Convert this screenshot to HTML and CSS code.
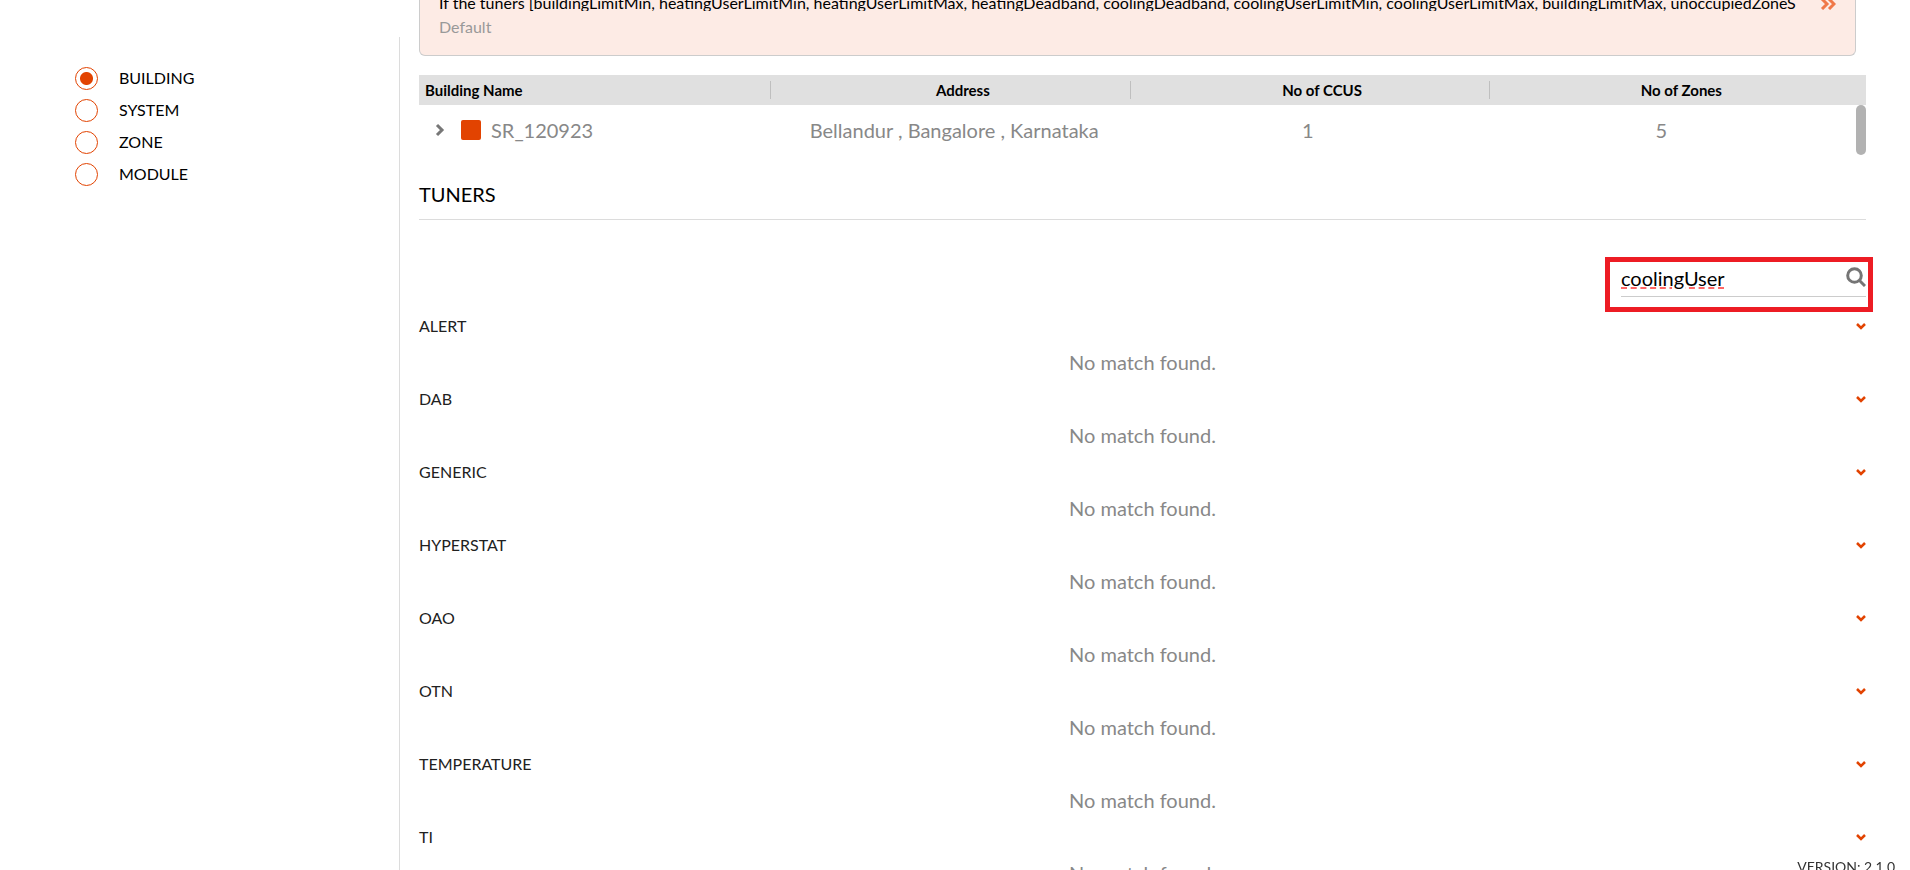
FILE: index.html
```html
<!DOCTYPE html>
<html lang="en">
<head>
  <meta charset="UTF-8">
  <title>Tuners</title>
  <link rel="stylesheet" href="styles.css">
</head>
<body>
  <div class="page">
    <aside class="sidebar">
      <form class="levels">
        <label class="level"><input type="radio" name="level" checked>BUILDING</label>
        <label class="level"><input type="radio" name="level">SYSTEM</label>
        <label class="level"><input type="radio" name="level">ZONE</label>
        <label class="level"><input type="radio" name="level">MODULE</label>
      </form>
    </aside>

    <main class="content">
      <section class="notice">
        <div class="notice-row">
          <p class="notice-text">If the tuners [buildingLimitMin, heatingUserLimitMin, heatingUserLimitMax, heatingDeadband, coolingDeadband, coolingUserLimitMin, coolingUserLimitMax, buildingLimitMax, unoccupiedZoneS</p>
          <button class="notice-more" type="button" aria-label="Show more">
            <svg viewBox="0 0 16 12" width="16" height="12"><path d="M2 1l5 5-5 5M9 1l5 5-5 5"/></svg>
          </button>
        </div>
        <p class="notice-sub">Default</p>
      </section>

      <table class="buildings">
        <thead>
          <tr>
            <th>Building Name</th>
            <th>Address</th>
            <th>No of CCUS</th>
            <th>No of Zones</th>
          </tr>
        </thead>
        <tbody>
          <tr>
            <td>
              <button class="expand" type="button" aria-label="Expand">
                <svg viewBox="0 0 10 14" width="10" height="14"><path d="M2 2l5 5-5 5"/></svg>
              </button>
              <span class="swatch"></span>
              SR_120923
            </td>
            <td>Bellandur , Bangalore , Karnataka</td>
            <td>1</td>
            <td>5</td>
          </tr>
        </tbody>
      </table>

      <h2 class="title">TUNERS</h2>

      <div class="search">
        <div class="search-field">
          <input class="search-input" type="text" value="coolingUser" aria-label="Search tuners">
          <button class="search-btn" type="button" aria-label="Search">
            <svg viewBox="0 0 20 20" width="20" height="20"><circle cx="8.5" cy="8.5" r="6.8"/><path d="M13 13l6 6"/></svg>
          </button>
        </div>
      </div>

      <div class="groups">
        <section class="group">
          <button class="group-head" type="button">ALERT<svg class="caret" viewBox="0 0 10 7" width="10" height="7"><path d="M1 1l4 4 4-4"/></svg></button>
          <p class="empty">No match found.</p>
        </section>
        <section class="group">
          <button class="group-head" type="button">DAB<svg class="caret" viewBox="0 0 10 7" width="10" height="7"><path d="M1 1l4 4 4-4"/></svg></button>
          <p class="empty">No match found.</p>
        </section>
        <section class="group">
          <button class="group-head" type="button">GENERIC<svg class="caret" viewBox="0 0 10 7" width="10" height="7"><path d="M1 1l4 4 4-4"/></svg></button>
          <p class="empty">No match found.</p>
        </section>
        <section class="group">
          <button class="group-head" type="button">HYPERSTAT<svg class="caret" viewBox="0 0 10 7" width="10" height="7"><path d="M1 1l4 4 4-4"/></svg></button>
          <p class="empty">No match found.</p>
        </section>
        <section class="group">
          <button class="group-head" type="button">OAO<svg class="caret" viewBox="0 0 10 7" width="10" height="7"><path d="M1 1l4 4 4-4"/></svg></button>
          <p class="empty">No match found.</p>
        </section>
        <section class="group">
          <button class="group-head" type="button">OTN<svg class="caret" viewBox="0 0 10 7" width="10" height="7"><path d="M1 1l4 4 4-4"/></svg></button>
          <p class="empty">No match found.</p>
        </section>
        <section class="group">
          <button class="group-head" type="button">TEMPERATURE<svg class="caret" viewBox="0 0 10 7" width="10" height="7"><path d="M1 1l4 4 4-4"/></svg></button>
          <p class="empty">No match found.</p>
        </section>
        <section class="group">
          <button class="group-head" type="button">TI<svg class="caret" viewBox="0 0 10 7" width="10" height="7"><path d="M1 1l4 4 4-4"/></svg></button>
          <p class="empty">No match found.</p>
        </section>
      </div>
    </main>
  </div>

  <footer class="version">VERSION: 2.1.0</footer>
</body>
</html>
```
FILE: styles.css
```css
* {
  box-sizing: border-box;
}

html, body {
  margin: 0;
  height: 100%;
  background: #fff;
  color: #000;
  font-family: Lato, sans-serif;
  font-size: 16px;
  overflow: hidden;
}

p, h2 {
  margin: 0;
}

button {
  padding: 0;
  border: 0;
  background: none;
  font: inherit;
  color: inherit;
  cursor: pointer;
}

svg {
  display: block;
  fill: none;
  stroke: currentColor;
}

.page {
  display: flex;
  height: 100vh;
}

.sidebar {
  width: 400px;
  flex-shrink: 0;
  margin-top: 37px;
  padding: 30px 0 0 75px;
  border-right: 1px solid #dcdcdc;
}

.levels {
  display: flex;
  flex-direction: column;
  gap: 9px;
}

.level {
  display: flex;
  align-items: flex-start;
  gap: 21px;
  height: 23px;
  line-height: 21px;
  cursor: pointer;
}

.level input {
  appearance: none;
  width: 23px;
  height: 23px;
  margin: 0;
  border: 1px solid #e24301;
  border-radius: 50%;
}

.level input:checked {
  background: radial-gradient(circle, #e24301 6px, transparent 7px);
}

.content {
  flex: 1;
  min-width: 0;
  padding: 0 44px 0 19px;
}

/* message box */
.notice {
  height: 56px;
  margin-right: 10px;
  padding: 0 19px;
  background: #fdebe5;
  border: 1px solid #ccc;
  border-top: 0;
  border-radius: 0 0 6px 6px;
}

.notice-row {
  display: flex;
  align-items: flex-end;
  height: 11px;
}

.notice-text {
  flex: 1;
  height: 18px;
  line-height: 20px;
  white-space: nowrap;
  overflow: hidden;
}

.notice-more {
  margin-bottom: 1px;
  color: #f07848;
  stroke-width: 3;
}

.notice-sub {
  padding-top: 6px;
  line-height: 20px;
  color: #999;
}

/* buildings table */
.buildings {
  display: block;
  margin-top: 19px;
}

.buildings thead,
.buildings tbody {
  display: block;
}

.buildings tr {
  display: flex;
  align-items: center;
  padding: 0 5px;
}

.buildings th,
.buildings td {
  width: 25%;
  padding: 0;
  text-align: center;
}

.buildings thead {
  background: #e0e0e0;
}

.buildings th {
  height: 30px;
  font-size: 15px;
  font-weight: 700;
  line-height: 30px;
  background: linear-gradient(#bfbfbf, #bfbfbf) right 12px center / 1px 18px no-repeat;
}

.buildings th:first-child {
  padding-left: 1px;
  text-align: left;
}

.buildings th:last-child {
  background: none;
}

.buildings tbody {
  position: relative;
  height: 50px;
  color: #888;
  font-size: 20px;
}

.buildings tbody tr {
  height: 50px;
  padding-right: 28px;
}

.buildings td:first-child {
  display: flex;
  align-items: center;
  gap: 10px;
  padding-left: 11px;
}

.buildings tbody::after {
  content: "";
  position: absolute;
  top: 0;
  right: 0;
  width: 10px;
  height: 50px;
  border-radius: 5px;
  background: #b2b2b2;
}

.expand {
  margin-right: 6px;
  color: #777;
  stroke-width: 3;
}

.swatch {
  width: 20px;
  height: 20px;
  border-radius: 2px;
  background: #e24301;
}

.title {
  margin-top: 23px;
  padding-bottom: 9px;
  border-bottom: 1px solid #dcdcdc;
  font-size: 20px;
  font-weight: 400;
  line-height: 32px;
}

/* search */
.search {
  width: 268px;
  height: 55px;
  margin: 37px -7px 0 auto;
  padding: 5px 2px 0 11px;
  border: 5px solid #ed1c24;
}

.search-field {
  display: flex;
  align-items: flex-start;
  height: 30px;
  border-bottom: 1px solid #ccc;
}

.search-input {
  flex: 1;
  min-width: 0;
  height: 22px;
  padding: 0;
  border: 0;
  outline: 0;
  background: none;
  font: 20px/20px Lato, sans-serif;
  text-decoration: underline dashed #f66 2px;
}

.search-btn {
  color: #757575;
  stroke-width: 3;
}

/* tuner groups */
.group {
  height: 73px;
}

.group-head {
  display: flex;
  align-items: center;
  justify-content: space-between;
  width: 100%;
  height: 28px;
  line-height: 28px;
  color: #212121;
}

.caret {
  color: #e24301;
  stroke-width: 2.5;
}

.empty {
  padding-top: 7px;
  line-height: 30px;
  font-size: 20px;
  text-align: center;
  color: #888;
}

.version {
  position: fixed;
  right: 15px;
  bottom: -7px;
  color: #333;
  font-size: 14px;
  line-height: 20px;
}
```
